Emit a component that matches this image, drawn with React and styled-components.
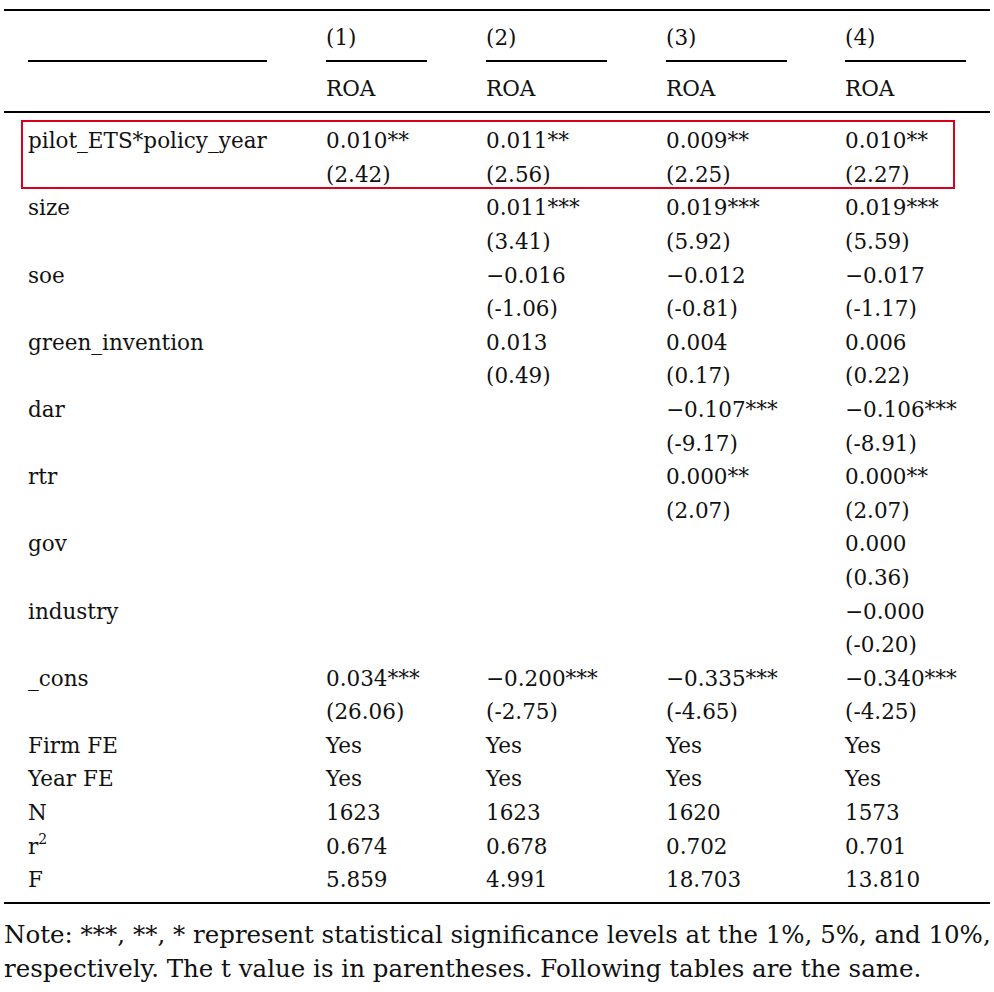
import styled, { createGlobalStyle } from 'styled-components';

const GlobalStyle = createGlobalStyle`
  html, body {
    margin: 0;
    padding: 0;
    background: #ffffff;
  }
  body {
    font-family: "DejaVu Serif", "Liberation Serif", serif;
    color: #111111;
  }
`;

const Page = styled.div`
  width: 986px;
  padding: 9px 4px 0 4px;
`;

const Rule = styled.div`
  height: 2px;
  background: #000000;
`;

const Grid = styled.div`
  display: grid;
  grid-template-columns: 298px 160px 180px 179px 1fr;
  padding-left: 24px;
  font-size: 21.5px;
  line-height: 33.6px;
`;

const HeadRow = styled(Grid)`
  margin-top: ${props => props.top || 0}px;
  margin-bottom: ${props => props.bottom || 0}px;
`;

const UnderlineRow = styled(Grid)`
  height: 2px;
  line-height: 2px;
`;

const Underline = styled.div`
  height: 2px;
  width: ${props => props.width}px;
  background: #000000;
`;

const Body = styled.div`
  padding: 11px 0 5px 0;
`;

const Group = styled(Grid)`
  position: relative;

  &::after {
    content: '';
    display: ${props => (props.highlight ? 'block' : 'none')};
    position: absolute;
    left: 17px;
    right: 35px;
    top: -4px;
    bottom: 2px;
    border: 2px solid #d9001b;
    pointer-events: none;
  }
`;

const Cell = styled.div`
  white-space: nowrap;
`;

const Sup = styled.sup`
  font-size: 14px;
  line-height: 0;
  position: relative;
  top: -2px;
  margin-left: 0;
`;

const Note = styled.p`
  margin: 14px 0 0 0;
  font-size: 24.5px;
  line-height: 34px;
  white-space: nowrap;
`;

const rows = [
  {
    label: 'pilot_ETS*policy_year',
    highlight: true,
    vals: [['0.010**', '(2.42)'], ['0.011**', '(2.56)'], ['0.009**', '(2.25)'], ['0.010**', '(2.27)']]
  },
  {
    label: 'size',
    vals: [null, ['0.011***', '(3.41)'], ['0.019***', '(5.92)'], ['0.019***', '(5.59)']]
  },
  {
    label: 'soe',
    vals: [null, ['\u22120.016', '(-1.06)'], ['\u22120.012', '(-0.81)'], ['\u22120.017', '(-1.17)']]
  },
  {
    label: 'green_invention',
    vals: [null, ['0.013', '(0.49)'], ['0.004', '(0.17)'], ['0.006', '(0.22)']]
  },
  {
    label: 'dar',
    vals: [null, null, ['\u22120.107***', '(-9.17)'], ['\u22120.106***', '(-8.91)']]
  },
  {
    label: 'rtr',
    vals: [null, null, ['0.000**', '(2.07)'], ['0.000**', '(2.07)']]
  },
  {
    label: 'gov',
    vals: [null, null, null, ['0.000', '(0.36)']]
  },
  {
    label: 'industry',
    vals: [null, null, null, ['\u22120.000', '(-0.20)']]
  },
  {
    label: '_cons',
    vals: [['0.034***', '(26.06)'], ['\u22120.200***', '(-2.75)'], ['\u22120.335***', '(-4.65)'], ['\u22120.340***', '(-4.25)']]
  }
];

const stats = [
  { label: 'Firm FE', vals: ['Yes', 'Yes', 'Yes', 'Yes'] },
  { label: 'Year FE', vals: ['Yes', 'Yes', 'Yes', 'Yes'] },
  { label: 'N', vals: ['1623', '1623', '1620', '1573'] },
  { label: <>r<Sup>2</Sup></>, vals: ['0.674', '0.678', '0.702', '0.701'] },
  { label: 'F', vals: ['5.859', '4.991', '18.703', '13.810'] }
];

const App = () => {
  return (
    <Page>
      <GlobalStyle />
      <Rule />
      <HeadRow top={10} bottom={5}>
        <Cell />
        <Cell>(1)</Cell>
        <Cell>(2)</Cell>
        <Cell>(3)</Cell>
        <Cell>(4)</Cell>
      </HeadRow>
      <UnderlineRow>
        <Underline width={239} />
        <Underline width={101} />
        <Underline width={121} />
        <Underline width={121} />
        <Underline width={121} />
      </UnderlineRow>
      <HeadRow top={10} bottom={6}>
        <Cell />
        <Cell>ROA</Cell>
        <Cell>ROA</Cell>
        <Cell>ROA</Cell>
        <Cell>ROA</Cell>
      </HeadRow>
      <Rule />
      <Body>
        {rows.map(row => (
          <Group key={row.label} highlight={row.highlight}>
            <Cell>{row.label}</Cell>
            {row.vals.map((v, i) => (
              <Cell key={i}>
                {v ? (
                  <>
                    {v[0]}
                    <br />
                    {v[1]}
                  </>
                ) : null}
              </Cell>
            ))}
          </Group>
        ))}
        {stats.map((row, idx) => (
          <Grid key={idx}>
            <Cell>{row.label}</Cell>
            {row.vals.map((v, i) => (
              <Cell key={i}>{v}</Cell>
            ))}
          </Grid>
        ))}
      </Body>
      <Rule />
      <Note>
        Note: ***, **, * represent statistical significance levels at the 1%, 5%, and 10%,
        <br />
        respectively. The t value is in parentheses. Following tables are the same.
      </Note>
    </Page>
  );
};

export default App;
